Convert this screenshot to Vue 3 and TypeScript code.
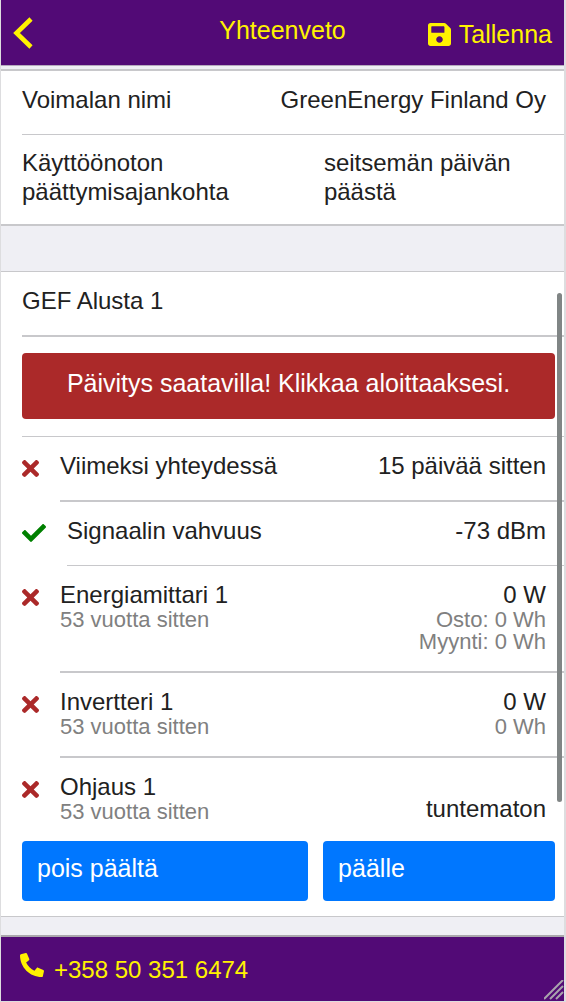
<script setup lang="ts">
interface Reading {
  label: string
  ok: boolean
  value: string
  since?: string
  details?: string[]
  thick: boolean
}

const readings: Reading[] = [
  { label: 'Viimeksi yhteydessä', ok: false, value: '15 päivää sitten', thick: true },
  { label: 'Signaalin vahvuus', ok: true, value: '-73 dBm', thick: false },
  {
    label: 'Energiamittari 1',
    ok: false,
    value: '0 W',
    since: '53 vuotta sitten',
    details: ['Osto: 0 Wh', 'Myynti: 0 Wh'],
    thick: true,
  },
  {
    label: 'Invertteri 1',
    ok: false,
    value: '0 W',
    since: '53 vuotta sitten',
    details: ['0 Wh'],
    thick: true,
  },
]

const crossPath =
  'M242.72 256l100.07-100.07c12.28-12.28 12.28-32.19 0-44.48l-22.24-22.24c-12.28-12.28-32.19-12.28-44.48 0L176 189.28 75.93 89.21c-12.28-12.28-32.19-12.28-44.48 0L9.21 111.45c-12.28 12.28-12.28 32.19 0 44.48L109.28 256 9.21 356.07c-12.28 12.28-12.28 32.19 0 44.48l22.24 22.24c12.28 12.28 32.2 12.28 44.48 0L176 322.72l100.07 100.07c12.28 12.28 32.2 12.28 44.48 0l22.24-22.24c12.28-12.28 12.28-32.19 0-44.48L242.72 256z'
</script>

<template>
  <div class="page">
    <header class="navbar">
      <button class="back" type="button" aria-label="Takaisin">
        <svg width="20" height="32" viewBox="0 0 20 32" aria-hidden="true">
          <path d="M18 2 3.500 16 18 30" fill="none" stroke="currentColor" stroke-width="4.600" />
        </svg>
      </button>
      <h1 class="title">Yhteenveto</h1>
      <button class="save" type="button">
        <svg width="23" height="23" viewBox="0 32 448 448" aria-hidden="true">
          <path
            fill="currentColor"
            d="M433.941 129.941l-83.882-83.882A48 48 0 0 0 316.118 32H48C21.490 32 0 53.490 0 80v352c0 26.510 21.490 48 48 48h352c26.510 0 48-21.490 48-48V163.882a48 48 0 0 0-14.059-33.941zM224 416c-35.346 0-64-28.654-64-64 0-35.346 28.654-64 64-64s64 28.654 64 64c0 35.346-28.654 64-64 64zm96-304.520V212c0 6.627-5.373 12-12 12H76c-6.627 0-12-5.373-12-12V108c0-6.627 5.373-12 12-12h228.520c3.183 0 6.235 1.264 8.485 3.515l3.480 3.480A11.996 11.996 0 0 1 320 111.480z"
          />
        </svg>
        <span>Tallenna</span>
      </button>
    </header>

    <main class="content">
      <section class="list list-first">
        <div class="row inset thin">
          <span>Voimalan nimi</span>
          <span>GreenEnergy Finland Oy</span>
        </div>
        <div class="row inset last">
          <span>Käyttöönoton päättymisajankohta</span>
          <span>seitsemän päivän päästä</span>
        </div>
      </section>

      <section class="list list-second">
        <div class="row inset thick">
          <h2>GEF Alusta 1</h2>
        </div>
        <div class="update inset thin">
          <button class="alert" type="button">Päivitys saatavilla! Klikkaa aloittaaksesi.</button>
        </div>

        <div v-for="item in readings" :key="item.label" class="reading">
          <svg v-if="item.ok" class="mark yes" width="24" height="18" viewBox="0 64 512 384" role="img" aria-label="OK">
            <path
              fill="currentColor"
              d="M173.898 439.404l-166.400-166.400c-9.997-9.997-9.997-26.206 0-36.204l36.203-36.204c9.997-9.998 26.207-9.998 36.204 0L192 312.690 432.095 72.596c9.997-9.997 26.207-9.997 36.204 0l36.203 36.204c9.997 9.997 9.997 26.206 0 36.204l-294.400 294.401c-9.998 9.997-26.207 9.997-36.204-.001z"
            />
          </svg>
          <svg v-else class="mark no" width="17" height="17" viewBox="0 80 352 352" role="img" aria-label="Virhe">
            <path fill="currentColor" :d="crossPath" />
          </svg>
          <div class="row" :class="[item.thick ? 'thick' : 'thin', { detailed: item.details }]">
            <div>
              <div>{{ item.label }}</div>
              <div v-if="item.since" class="sub">{{ item.since }}</div>
            </div>
            <div class="value">
              <div>{{ item.value }}</div>
              <div v-for="detail in item.details" :key="detail" class="sub">{{ detail }}</div>
            </div>
          </div>
        </div>

        <div class="reading">
          <svg class="mark no" width="17" height="17" viewBox="0 80 352 352" role="img" aria-label="Virhe">
            <path fill="currentColor" :d="crossPath" />
          </svg>
          <div class="row detailed">
            <div>
              <div>Ohjaus 1</div>
              <div class="sub">53 vuotta sitten</div>
            </div>
            <div class="state">tuntematon</div>
          </div>
        </div>
        <div class="controls">
          <button type="button">pois päältä</button>
          <button type="button">päälle</button>
        </div>
      </section>
    </main>

    <footer class="toolbar">
      <a class="phone" href="tel:+358503516474">
        <svg width="24" height="24" viewBox="0 0 512 512" aria-hidden="true">
          <path
            fill="currentColor"
            transform="translate(512 0) scale(-1 1)"
            d="M493.400 24.600l-104-24c-11.300-2.600-22.900 3.300-27.500 13.900l-48 112c-4.200 9.800-1.400 21.300 6.900 28l60.600 49.600c-36 76.700-98.900 140.500-177.200 177.200l-49.600-60.600c-6.800-8.300-18.200-11.100-28-6.900l-112 48C3.900 366.500-2 378.100.600 389.400l24 104C27.100 504.200 36.700 512 48 512c256.100 0 464-207.500 464-464 0-11.200-7.700-20.900-18.600-23.400z"
          />
        </svg>
        <span>+358 50 351 6474</span>
      </a>
    </footer>

    <div class="scroll-thumb"></div>
    <svg class="grip" width="20" height="20" viewBox="0 0 20 20" aria-hidden="true">
      <path d="M0 19 19 0M6 19 19 6M12 19 19 12" stroke="#a9a3ad" stroke-width="2" />
    </svg>
  </div>
</template>

<style>
body {
  margin: 0;
}
</style>

<style scoped>
.page {
  position: relative;
  box-sizing: border-box;
  min-height: 100vh;
  display: flex;
  flex-direction: column;
  border: solid #dddddf;
  border-width: 0 2px 1px 1px;
  background: #efeff4;
  color: #212121;
  font-family: "Liberation Sans", Arial, sans-serif;
  font-size: 24px;
  line-height: 29px;
}

button {
  margin: 0;
  border: 0;
  background: none;
  color: inherit;
  font: inherit;
  cursor: pointer;
}

h1,
h2 {
  margin: 0;
  font: inherit;
}

.navbar {
  display: grid;
  grid-template-columns: 1fr auto 1fr;
  height: 65px;
  border-bottom: 1px solid #b5a9bd;
  background: #520a76;
  color: #fff200;
}

.back {
  display: flex;
  align-items: center;
  justify-self: start;
  padding: 0 12px;
}

.title {
  padding-top: 16px;
  font-size: 25px;
}

.save {
  display: flex;
  align-items: center;
  justify-self: end;
  gap: 8px;
  padding: 3px 12px 0 0;
  font-size: 25px;
}

.content {
  flex: 1;
  padding: 3px 0 18px;
}

.list {
  border: solid #c8c8cb;
  background: #fff;
}

.list-first {
  border-width: 2px 0;
}

.list-second {
  margin-top: 45px;
  border-width: 1px 0;
}

.row {
  display: flex;
  flex: 1;
  justify-content: space-between;
  gap: 5px;
  min-height: 32px;
  padding: 14px 18px 17px 0;
}

.inset {
  margin-left: 21px;
}

.thin {
  border-bottom: 1px solid #c8c8cb;
}

.thick {
  border-bottom: 2px solid #c8c8cb;
}

.last {
  padding-top: 13px;
  padding-bottom: 18px;
}

.detailed {
  padding-bottom: 18px;
}

.update {
  padding: 16px 9px 17px 0;
}

.alert {
  width: 100%;
  height: 66px;
  padding: 0 12px 6px;
  border-radius: 4px;
  background: #ab2929;
  color: #fff;
  font-size: 25px;
}

.reading {
  display: flex;
  gap: 21px;
  padding-left: 21px;
}

.mark {
  flex: none;
  margin-top: 23px;
}

.yes {
  margin-top: 22px;
  color: #008000;
}

.no {
  color: #ab2929;
}

.value {
  text-align: right;
}

.sub {
  color: #808080;
  font-size: 22px;
  line-height: 22px;
}

.state {
  align-self: flex-end;
}

.controls {
  display: flex;
  gap: 15px;
  padding: 0 9px 15px 21px;
}

.controls button {
  flex: 1 1 auto;
  height: 60px;
  padding: 0 15px 6px;
  border-radius: 4px;
  background: #0077ff;
  color: #fff;
  font-size: 25px;
  text-align: left;
}

.toolbar {
  height: 64px;
  border-top: 2px solid #aaa7ac;
  background: #520a76;
  color: #fff200;
}

.phone {
  display: inline-flex;
  gap: 10px;
  padding: 16px 0 0 19px;
  color: inherit;
  text-decoration: none;
}

.phone span {
  padding-top: 2px;
}

.scroll-thumb {
  position: absolute;
  top: 293px;
  right: 2px;
  bottom: 199px;
  width: 5px;
  border-radius: 3px;
  background: #808585;
}

.grip {
  position: absolute;
  right: 0;
  bottom: 1px;
}
</style>
